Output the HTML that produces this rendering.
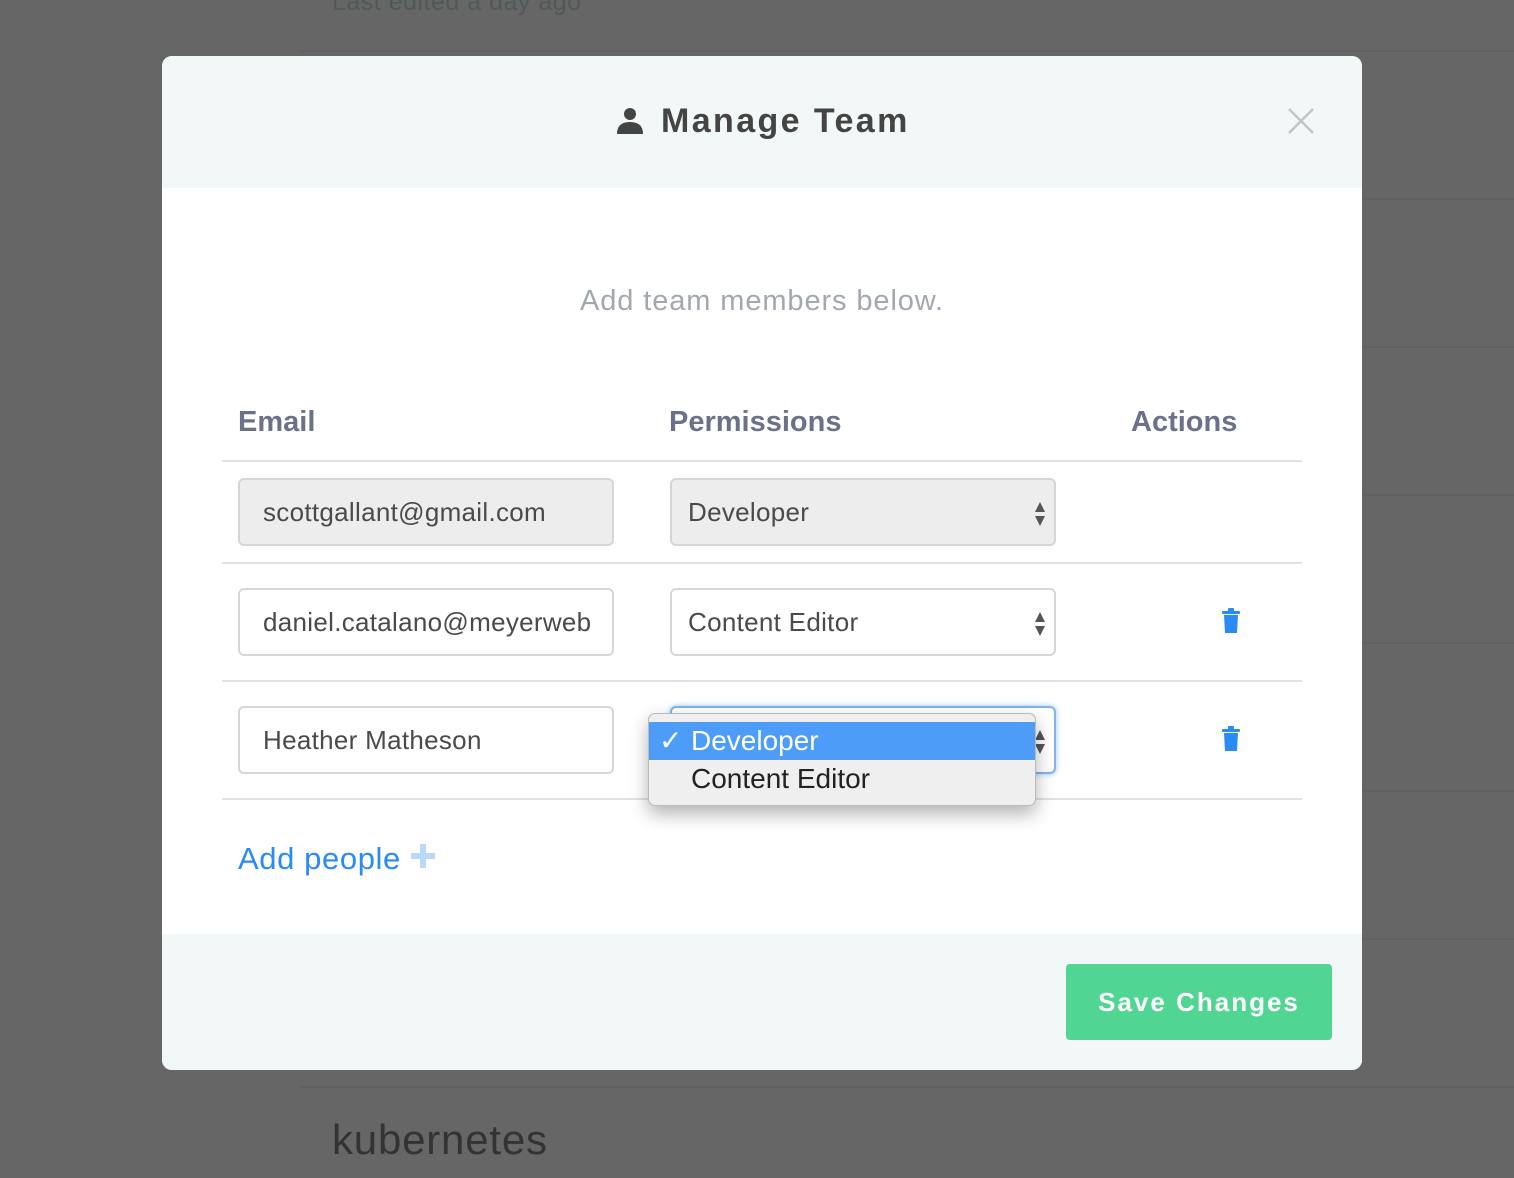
<!DOCTYPE html>
<html><head><style>
*{box-sizing:border-box;margin:0;padding:0}
body{width:1514px;height:1178px;background:#666;position:relative;overflow:hidden;font-family:"Liberation Sans",sans-serif}
.bgline{position:absolute;left:300px;right:0;height:2px;background:#5f6262}
.abs{position:absolute}
.modal{position:absolute;left:162px;top:56px;width:1200px;height:1014px;background:#fff;border-radius:10px;overflow:hidden}
.hdr{position:absolute;left:0;top:0;width:1200px;height:132px;background:#f2f7f7}
.ftr{position:absolute;left:0;top:878px;width:1200px;height:136px;background:#f2f7f7}
.inp{position:absolute;height:68px;border:2px solid #d6d6d6;border-radius:6px;font-size:26px;color:#4a4a4a;padding-left:23px;line-height:64px;white-space:nowrap;overflow:hidden;letter-spacing:0.3px}
.sep{position:absolute;left:60px;width:1080px;height:2px;background:#e2e2e2}
.th{position:absolute;top:350px;font-size:29px;font-weight:bold;color:#6b7189}
.arr{position:absolute;right:8px;top:21px;width:12px}
</style></head><body>
<div class="abs" style="left:332px;top:-12px;font-size:25px;color:#4f5959;letter-spacing:0.5px">Last edited a day ago</div>
<div class="bgline" style="top:50px"></div>
<div class="bgline" style="top:198px"></div>
<div class="bgline" style="top:346px"></div>
<div class="bgline" style="top:494px"></div>
<div class="bgline" style="top:642px"></div>
<div class="bgline" style="top:790px"></div>
<div class="bgline" style="top:938px"></div>
<div class="bgline" style="top:1086px"></div>
<div class="abs" style="left:332px;top:1116px;font-size:42px;color:#333;letter-spacing:0.8px">kubernetes</div>

<div class="modal">
 <div class="hdr">
  <svg class="abs" style="left:454px;top:50px" width="28" height="28" viewBox="0 0 28 28"><circle cx="14" cy="8" r="6" fill="#444"/><path d="M1 28 Q1 16 14 16 Q27 16 27 28Z" fill="#444"/></svg>
  <div class="abs" style="left:499px;top:46px;font-size:34px;font-weight:bold;color:#444;letter-spacing:2.4px">Manage Team</div>
  <svg class="abs" style="left:1126px;top:52px" width="26" height="26" viewBox="0 0 26 26"><path d="M1 1L25 25M25 1L1 25" stroke="#c4c4c4" stroke-width="2.5"/></svg>
 </div>
 <div class="abs" style="left:0;width:1200px;top:229px;text-align:center;font-size:29px;color:#a3a8b0;letter-spacing:0.9px">Add team members below.</div>
 <div class="th" style="left:76px">Email</div>
 <div class="th" style="left:507px">Permissions</div>
 <div class="th" style="left:969px">Actions</div>
 <div class="sep" style="top:404px"></div>
 <div class="inp" style="left:76px;top:422px;width:376px;background:#ededed">scottgallant@gmail.com</div>
 <div class="inp" style="left:508px;top:422px;width:386px;background:#ededed;padding-left:16px">Developer<svg class="arr" height="26" viewBox="0 0 12 26"><path d="M6 1L11 11H1ZM6 25L11 15H1Z" fill="#555"/></svg></div>
 <div class="sep" style="top:506px"></div>
 <div class="inp" style="left:76px;top:532px;width:376px"><div style="width:328px;overflow:hidden">daniel.catalano@meyerwebb</div></div>
 <div class="inp" style="left:508px;top:532px;width:386px;padding-left:16px">Content Editor<svg class="arr" height="26" viewBox="0 0 12 26"><path d="M6 1L11 11H1ZM6 25L11 15H1Z" fill="#555"/></svg></div>
 <svg class="abs" style="left:1059px;top:552px" width="20" height="26" viewBox="0 0 20 26"><rect x="1" y="3" width="18" height="3" rx="1" fill="#2a8af6"/><rect x="7" y="0" width="6" height="4" rx="1" fill="#2a8af6"/><path d="M3 7H17L16 25H4Z" fill="#2a8af6"/></svg>
 <div class="sep" style="top:624px"></div>
 <div class="inp" style="left:76px;top:650px;width:376px">Heather Matheson</div>
 <div class="inp" style="left:508px;top:650px;width:386px;border-color:#7fb4ec;box-shadow:0 0 6px #9cc8f5"><svg class="arr" height="26" viewBox="0 0 12 26"><path d="M6 1L11 11H1ZM6 25L11 15H1Z" fill="#555"/></svg></div>
 <svg class="abs" style="left:1059px;top:670px" width="20" height="26" viewBox="0 0 20 26"><rect x="1" y="3" width="18" height="3" rx="1" fill="#2a8af6"/><rect x="7" y="0" width="6" height="4" rx="1" fill="#2a8af6"/><path d="M3 7H17L16 25H4Z" fill="#2a8af6"/></svg>
 <div class="sep" style="top:742px"></div>
 <div class="abs" style="left:486px;top:657px;width:388px;height:93px;background:#efefef;border:1px solid #bbb;border-radius:7px;box-shadow:0 8px 18px rgba(0,0,0,0.3);overflow:hidden">
  <div style="position:absolute;left:0;top:8px;width:388px;height:38px;background:#4c9cf8;color:#fff;font-size:28px;line-height:38px;padding-left:10px">✓ <span style="position:absolute;left:42px">Developer</span></div>
  <div style="position:absolute;left:42px;top:46px;font-size:28px;line-height:38px;color:#222">Content Editor</div>
 </div>
 <div class="abs" style="left:76px;top:785px;font-size:31px;color:#2a8af6;letter-spacing:0.6px">Add people</div>
 <svg class="abs" style="left:248px;top:787px" width="26" height="26" viewBox="0 0 26 26"><path d="M10 1H16V10H25V16H16V25H10V16H1V10H10Z" fill="#b9d9fb"/></svg>
 <div class="ftr"></div>
 <div class="abs" style="left:904px;top:908px;width:266px;height:76px;background:#50d592;border-radius:4px;color:#fff;font-size:26px;font-weight:bold;letter-spacing:2px;text-align:center;line-height:76px">Save Changes</div>
</div>
</body></html>
